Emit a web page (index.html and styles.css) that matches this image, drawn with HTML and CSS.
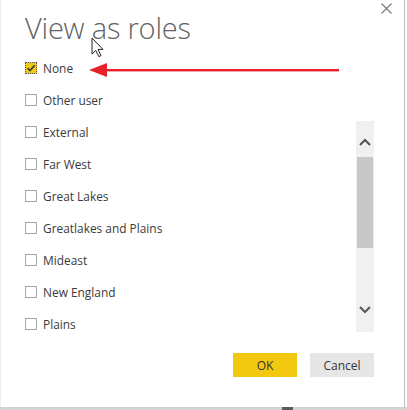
FILE: index.html
```html
<!DOCTYPE html>
<html lang="en">
<head>
    <meta charset="UTF-8">
    <title>View as roles</title>
    <link rel="stylesheet" href="styles.css">
</head>
<body>

<div class="dialog">
    <button class="close" aria-label="Close">
        <svg width="11" height="11" viewBox="0 0 11 11"><path d="M0.5 0.5 L10.5 10.5 M10.5 0.5 L0.5 10.5" stroke="#7a7a7a" stroke-width="1.2" fill="none"/></svg>
    </button>

    <h1 class="title">View as roles</h1>

    <div class="option checked">
        <span class="box">
            <svg width="10" height="10" viewBox="0 0 10 10"><path d="M1.5 5.2 L4 7.6 L8.6 2.4" stroke="#3a3a3a" stroke-width="1.6" fill="none"/></svg>
        </span>
        <span class="label">None</span>
    </div>
    <div class="option"><span class="box"></span><span class="label">Other user</span></div>

    <div class="roles">
        <div class="role-list">
            <div class="option"><span class="box"></span><span class="label">External</span></div>
            <div class="option"><span class="box"></span><span class="label">Far West</span></div>
            <div class="option"><span class="box"></span><span class="label">Great Lakes</span></div>
            <div class="option"><span class="box"></span><span class="label">Greatlakes and Plains</span></div>
            <div class="option"><span class="box"></span><span class="label">Mideast</span></div>
            <div class="option"><span class="box"></span><span class="label">New England</span></div>
            <div class="option"><span class="box"></span><span class="label">Plains</span></div>
        </div>
        <div class="scrollbar">
            <span class="sb-btn sb-up">
                <svg width="12" height="8" viewBox="0 0 12 8"><path d="M1 7 L6 2 L11 7" stroke="#555" stroke-width="2" fill="none"/></svg>
            </span>
            <span class="sb-thumb"></span>
            <span class="sb-track"></span>
            <span class="sb-btn sb-down">
                <svg width="12" height="8" viewBox="0 0 12 8"><path d="M1 1 L6 6 L11 1" stroke="#555" stroke-width="2" fill="none"/></svg>
            </span>
        </div>
    </div>

    <div class="actions">
        <button class="btn ok">OK</button>
        <button class="btn cancel">Cancel</button>
    </div>

    <!-- annotation arrow drawn over the dialog -->
    <svg class="arrow" width="252" height="16" viewBox="0 0 252 16">
        <path d="M0 7 L18 0 L18 14 Z" fill="#e8202a"/>
        <rect x="16" y="6" width="234" height="2.4" fill="#e8202a"/>
    </svg>

    <svg class="cursor" width="14" height="21" viewBox="0 0 14 21">
        <path d="M1 1 L1 17 L4.8 13.4 L7.8 19.6 L10 18.6 L7 12.4 L12 12.4 Z" fill="#fff" stroke="#222" stroke-width="1" stroke-linejoin="round"/>
    </svg>
</div>
<div class="taskbar"><span class="mark"></span></div>

</body>
</html>
```

FILE: styles.css
```css
* {
    margin: 0;
    box-sizing: border-box;
}

body {
    margin: 0;
    width: 407px;
    height: 410px;
    overflow: hidden;
    background: #fff;
    font-family: "Open Sans", Arial, sans-serif;
    color: #333;
}

.dialog {
    position: relative;
    width: 405px;
    height: 407px;
    border-right: 1px solid #bdbdbd;
    border-left: 1px solid #ededed;
    padding: 0 30px 0 24px;
    display: flex;
    flex-direction: column;
}

.close {
    position: absolute;
    top: 3px;
    right: 12px;
    border: none;
    background: none;
    padding: 0;
    width: 11px;
    height: 11px;
    display: flex;
}

.title {
    font-weight: 300;
    font-size: 29px;
    line-height: 36px;
    color: #636363;
    height: 52px;
    padding-top: 10px;
    letter-spacing: -0.2px;
}

.option {
    height: 32px;
    display: flex;
    align-items: center;
    gap: 6px;
    font-size: 11.9px;
    color: #3b3b3b;
}

.label {
    margin-top: -1px;
}

.box {
    width: 12px;
    height: 12px;
    border: 1px solid #a6a6a6;
    background: #fff;
    display: flex;
    align-items: center;
    justify-content: center;
    flex-shrink: 0;
}

.checked .box {
    background: #f2c811;
    border: 1px dotted #555;
}

.roles {
    height: 224px;
    display: flex;
    justify-content: space-between;
}

.role-list {
    display: flex;
    flex-direction: column;
}

.scrollbar {
    width: 18px;
    margin-top: 5px;
    height: 211px;
    background: #f0f0f0;
    display: flex;
    flex-direction: column;
    align-items: center;
}

.sb-btn {
    height: 36px;
    width: 100%;
    display: flex;
    justify-content: center;
}

.sb-up {
    align-items: flex-end;
    padding-bottom: 11px;
}

.sb-down {
    align-items: flex-start;
    padding-top: 10px;
}

.sb-thumb {
    width: 16px;
    height: 91px;
    background: #c8c8c8;
}

.sb-track {
    flex: 1;
}

.actions {
    display: flex;
    justify-content: flex-end;
    gap: 13px;
    margin-top: 13px;
}

.btn {
    width: 64px;
    height: 24px;
    border: none;
    font-family: "Open Sans", Arial, sans-serif;
    font-size: 12px;
    color: #333;
    padding: 0;
}

.ok {
    background: #f2c811;
}

.cancel {
    background: #e6e6e6;
}

.arrow {
    position: absolute;
    left: 88px;
    top: 63px;
}

.cursor {
    position: absolute;
    left: 90px;
    top: 37px;
}

.taskbar {
    height: 3px;
    background: #d2d2d2;
    position: relative;
}

.mark {
    position: absolute;
    left: 282px;
    top: 0;
    width: 11px;
    height: 3px;
    background: #5a5a5a;
}
```
